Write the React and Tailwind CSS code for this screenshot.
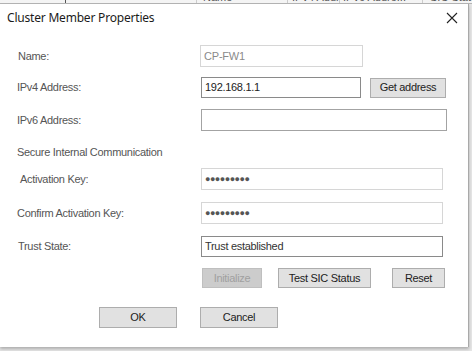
// Cluster Member Properties dialog
// Windows-style properties dialog sitting over a table of cluster members.

const labelFont = { fontFamily: '"Liberation Sans", Arial, sans-serif' };

const Field = ({ width, border, children, className = '' }) => (
  <div
    className={`h-full flex items-center px-[3px] bg-white border ${border} ${className}`}
    style={{ width }}
  >
    {children}
  </div>
);

const Button = ({ width, disabled, children }) => (
  <button
    className={`h-full flex items-center justify-center border text-[11px] tracking-[-0.3px] ${
      disabled
        ? 'bg-[#cccccc] border-[#bfbfbf] text-[#a0a0a0]'
        : 'bg-[#e1e1e1] border-[#adadad] text-[#222]'
    }`}
    style={{ width, ...labelFont }}
  >
    {children}
  </button>
);

const Dots = () => (
  <span className="text-[#555] text-[9px] tracking-[-0.5px] leading-none">●●●●●●●●●</span>
);

const Row = ({ label, labelClass = '', h, mt, children }) => (
  <div className={`flex items-center ${h} ${mt}`}>
    <div className={`w-[184px] text-[11px] tracking-[-0.3px] text-[#555] ${labelClass}`}>{label}</div>
    <div className="flex h-full items-center">{children}</div>
  </div>
);

export default function App() {
  return (
    <div className="w-[472px] h-[351px] bg-[#e6e6e6] overflow-hidden" style={labelFont}>
      {/* table header peeking out behind the dialog */}
      <div className="h-[4px] overflow-hidden bg-[#f4f4f4] border-b border-[#b5b5b5]">
        <div className="flex text-[11px] text-[#555] -mt-[10px] h-[14px] leading-[14px] whitespace-nowrap">
          <div className="w-[66px] shrink-0 border-r border-[#555]"></div>
          <div className="w-[131px] shrink-0 border-r border-[#ccc]"></div>
          <div className="w-[91px] shrink-0 overflow-hidden border-r border-[#ccc] pl-[6px]">Name</div>
          <div className="w-[52px] shrink-0 overflow-hidden border-r border-[#ccc] pl-[4px]">IPv4 Addr...</div>
          <div className="w-[83px] shrink-0 overflow-hidden border-r border-[#ccc] pl-[3px]">IPv6 Addre...</div>
          <div className="pl-[7px] overflow-hidden">SIC State</div>
        </div>
      </div>

      <div className="w-[469px] h-[343px] bg-white border-r border-[#a9a9a9] shadow-[0_2px_3px_rgba(0,0,0,0.25)] flex flex-col">
        {/* title bar */}
        <div className="h-[27px] flex items-center justify-between pl-[7px] pr-[10px]">
          <span
            className="text-[12px] text-[#1b1b1b] tracking-[-0.2px]"
            style={{ fontFamily: '"Noto Sans", "Open Sans", sans-serif' }}
          >
            Cluster Member Properties
          </span>
          <svg width="12" height="12" viewBox="0 0 12 12" className="mt-[1px]">
            <path d="M1 1 L11 11 M11 1 L1 11" stroke="#222" strokeWidth="1.1" fill="none" />
          </svg>
        </div>

        <div className="pl-[17px] flex flex-col">
          <Row label="Name:" h="h-[22px]" mt="mt-[14px]" labelClass="pl-[1px]">
            <Field width={163} border="border-[#d6d6d6]" className="-ml-[1px]">
              <span className="text-[11px] text-[#8a8a8a] tracking-[-0.2px]">CP-FW1</span>
            </Field>
          </Row>

          <Row label="IPv4 Address:" h="h-[21px]" mt="mt-[10px]">
            <Field width={160} border="border-[#8a8a8a]">
              <span className="text-[11px] text-[#222] tracking-[-0.3px]">192.168.1.1</span>
            </Field>
            <div className="ml-[9px] h-[20px]">
              <Button width={76}>Get address</Button>
            </div>
          </Row>

          <Row label="IPv6 Address:" h="h-[22px]" mt="mt-[11px]">
            <Field width={246} border="border-[#a3a3a3]" />
          </Row>

          <div className="mt-[13px] h-[16px] flex items-center text-[11px] tracking-[-0.3px] text-[#555]">
            Secure Internal Communication
          </div>

          <Row label="Activation Key:" h="h-[22px]" mt="mt-[8px]" labelClass="pl-[3px]">
            <Field width={242} border="border-[#d6d6d6]">
              <Dots />
            </Field>
          </Row>

          <Row label="Confirm Activation Key:" h="h-[22px]" mt="mt-[12px]">
            <Field width={242} border="border-[#d6d6d6]">
              <Dots />
            </Field>
          </Row>

          <Row label="Trust State:" h="h-[21px]" mt="mt-[12px]" labelClass="pl-[1px]">
            <Field width={242} border="border-[#8a8a8a]">
              <span className="text-[11px] text-[#333] tracking-[-0.3px]">Trust established</span>
            </Field>
          </Row>

          <div className="flex h-[20px] mt-[11px] pl-[185px] gap-0">
            <Button width={60} disabled>
              Initialize
            </Button>
            <div className="ml-[16px] h-full">
              <Button width={93}>Test SIC Status</Button>
            </div>
            <div className="ml-[21px] h-full">
              <Button width={53}>Reset</Button>
            </div>
          </div>

          <div className="flex h-[21px] mt-[19px] pl-[82px]">
            <Button width={78}>OK</Button>
            <div className="ml-[23px] h-full">
              <Button width={78}>Cancel</Button>
            </div>
          </div>
        </div>
      </div>
    </div>
  );
}
